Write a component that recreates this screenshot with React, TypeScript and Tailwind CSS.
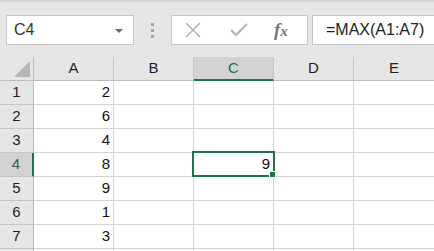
import React from 'react';

const columns = ['A', 'B', 'C', 'D', 'E'];
const values = [2, 6, 4, 8, 9, 1, 3];

const font = { fontFamily: '"Liberation Sans", Arial, sans-serif' };

const FormulaBar: React.FC = () => (
  <div className="flex items-center h-[30px] mt-[13px] pl-[6px]">
    <div className="relative w-[128px] h-[30px] bg-white border border-[#c6c6c6] flex items-center pl-[7px] text-[16px] text-[#333]">
      C4
      <div className="absolute right-[10px] top-[13px] w-0 h-0 border-l-[4px] border-r-[4px] border-t-[4px] border-l-transparent border-r-transparent border-t-[#6b6b6b]" />
    </div>
    <div className="w-[37px] flex flex-col items-center gap-[3px]">
      <span className="w-[3px] h-[3px] bg-[#a6a6a6]" />
      <span className="w-[3px] h-[3px] bg-[#a6a6a6]" />
      <span className="w-[3px] h-[3px] bg-[#a6a6a6]" />
    </div>
    <div className="w-[137px] h-[30px] bg-white border border-[#c6c6c6] flex items-center pl-[12px]">
      <svg width="18" height="18" viewBox="0 0 18 18">
        <path d="M2 2 L16 16 M16 2 L2 16" stroke="#b0b0b0" strokeWidth="1.4" />
      </svg>
      <svg className="ml-[27px]" width="20" height="18" viewBox="0 0 20 18">
        <path d="M2 9 L7 14 L18 3" stroke="#b8b8b8" strokeWidth="2.4" fill="none" />
      </svg>
      <span
        className="ml-[25px] text-[19px] italic font-bold text-[#777]"
        style={{ fontFamily: '"Liberation Serif", serif' }}
      >
        f<span className="text-[15px]">x</span>
      </span>
    </div>
    <div className="flex-1 h-[30px] ml-[4px] bg-white border border-[#c6c6c6] border-r-0 flex items-center pl-[13px] text-[16px] text-[#222]">
      =MAX(A1:A7)
    </div>
  </div>
);

export default function App() {
  return (
    <div className="w-[434px] h-[251px] overflow-hidden bg-[#e6e6e6]" style={font}>
      <div className="h-[2px] bg-[#d4d4d4]" />
      <FormulaBar />
      <div className="mt-[12px] grid grid-cols-[34px_80px_80px_80px_80px_81px] grid-rows-[24px] auto-rows-[24px]">
        <div className="relative border-r border-b border-[#bcbcbc] bg-[#e6e6e6]">
          <svg className="absolute left-[14px] top-[4px]" width="16" height="16" viewBox="0 0 16 16">
            <path d="M16 0 L16 16 L0 16 Z" fill="#b6b6b6" />
          </svg>
        </div>
        {columns.map((c) => (
          <div
            key={c}
            className={
              c === 'C'
                ? 'flex items-center justify-center text-[15px] bg-[#d2d2d2] text-[#217346] border-r border-[#c6c6c6] border-b-2 border-b-[#217346]'
                : 'flex items-center justify-center text-[15px] bg-[#e6e6e6] text-[#222] border-r border-[#c6c6c6] border-b border-b-[#bcbcbc]'
            }
          >
            {c}
          </div>
        ))}
        {values.map((v, i) => (
          <React.Fragment key={i}>
            <div
              className={
                i === 3
                  ? 'flex items-center justify-center text-[15px] bg-[#d2d2d2] text-[#2e5e4e] border-b border-[#c6c6c6] border-r-2 border-r-[#217346]'
                  : 'flex items-center justify-center text-[15px] bg-[#e6e6e6] text-[#222] border-b border-[#c6c6c6] border-r border-r-[#bcbcbc]'
              }
            >
              {i + 1}
            </div>
            <div className="bg-white border-r border-b border-[#d4d4d4] flex items-center justify-end pr-[3px] text-[15px] text-[#111]">
              {v}
            </div>
            <div className="bg-white border-r border-b border-[#d4d4d4]" />
            <div className="relative bg-white border-r border-b border-[#d4d4d4] flex items-center justify-end pr-[3px] text-[15px] text-[#111]">
              {i === 3 && (
                <>
                  9
                  <div className="absolute left-[-2px] top-[-2px] right-[-2px] bottom-[-1px] border-2 border-[#217346] z-10">
                    <div className="absolute right-[-3px] bottom-[-3px] w-[7px] h-[7px] bg-[#217346] border border-white" />
                  </div>
                </>
              )}
            </div>
            <div className="bg-white border-r border-b border-[#d4d4d4]" />
            <div className="bg-white border-b border-[#d4d4d4]" />
          </React.Fragment>
        ))}
        <div className="bg-[#e6e6e6] border-r border-[#bcbcbc]" />
        <div className="bg-white border-r border-[#d4d4d4]" />
        <div className="bg-white border-r border-[#d4d4d4]" />
        <div className="bg-white border-r border-[#d4d4d4]" />
        <div className="bg-white border-r border-[#d4d4d4]" />
        <div className="bg-white" />
      </div>
    </div>
  );
}
